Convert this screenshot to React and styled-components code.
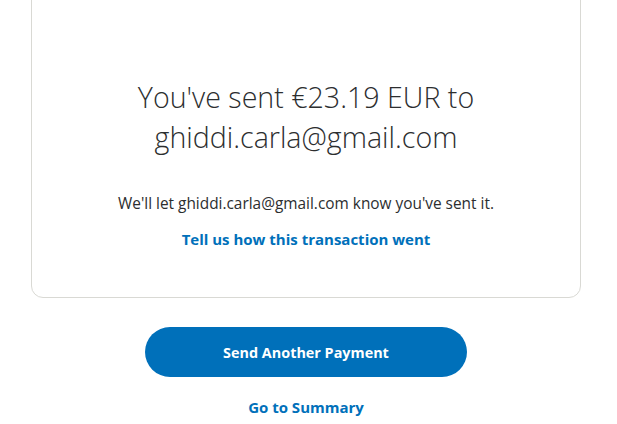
import React from "react";
import styled, { createGlobalStyle } from "styled-components";

const Global = createGlobalStyle`
  html, body { margin: 0; padding: 0; background: #fff; }
  body { font-family: "Open Sans", "Noto Sans", sans-serif; color: #2c2e2f; }
`;

const Page = styled.div`
  width: 617px;
  display: flex;
  flex-direction: column;
  align-items: flex-start;
`;

const Card = styled.div`
  box-sizing: border-box;
  margin: -20px 0 0 31px;
  width: 550px;
  height: 318px;
  border: 1px solid #d9d9d4;
  border-radius: 12px;
  display: flex;
  flex-direction: column;
  align-items: center;
  padding-top: 96px;
`;

const Heading = styled.h1`
  margin: 0;
  font-family: "Open Sans", sans-serif;
  font-weight: 300;
  font-size: 28.6px;
  line-height: 40px;
  text-align: center;
  color: #2c2e2f;
  width: 380px;
`;

const Note = styled.p`
  margin: 37px 0 0;
  font-size: 15.4px;
  line-height: 20px;
  color: #2c2e2f;
`;

const Link = styled.a`
  display: block;
  font-weight: 700;
  font-size: 15px;
  line-height: 20px;
  color: #0070ba;
  text-decoration: none;
  margin-top: ${(p) => p.$mt || 0}px;
  text-align: center;
`;

const Actions = styled.div`
  width: 550px;
  margin-left: 31px;
  display: flex;
  flex-direction: column;
  align-items: center;
  padding-top: 29px;
`;

const Button = styled.button`
  width: 322px;
  height: 50px;
  border: none;
  border-radius: 25px;
  background: #0070ba;
  color: #fff;
  font-family: "Open Sans", sans-serif;
  font-weight: 700;
  font-size: 14.4px;
`;

export default function App() {
  return (
    <>
      <Global />
      <Page>
        <Card>
          <Heading>You've sent €23.19 EUR to ghiddi.carla@gmail.com</Heading>
          <Note>We'll let ghiddi.carla@gmail.com know you've sent it.</Note>
          <Link $mt={15}>Tell us how this transaction went</Link>
        </Card>
        <Actions>
          <Button>Send Another Payment</Button>
          <Link $mt={20}>Go to Summary</Link>
        </Actions>
      </Page>
    </>
  );
}
